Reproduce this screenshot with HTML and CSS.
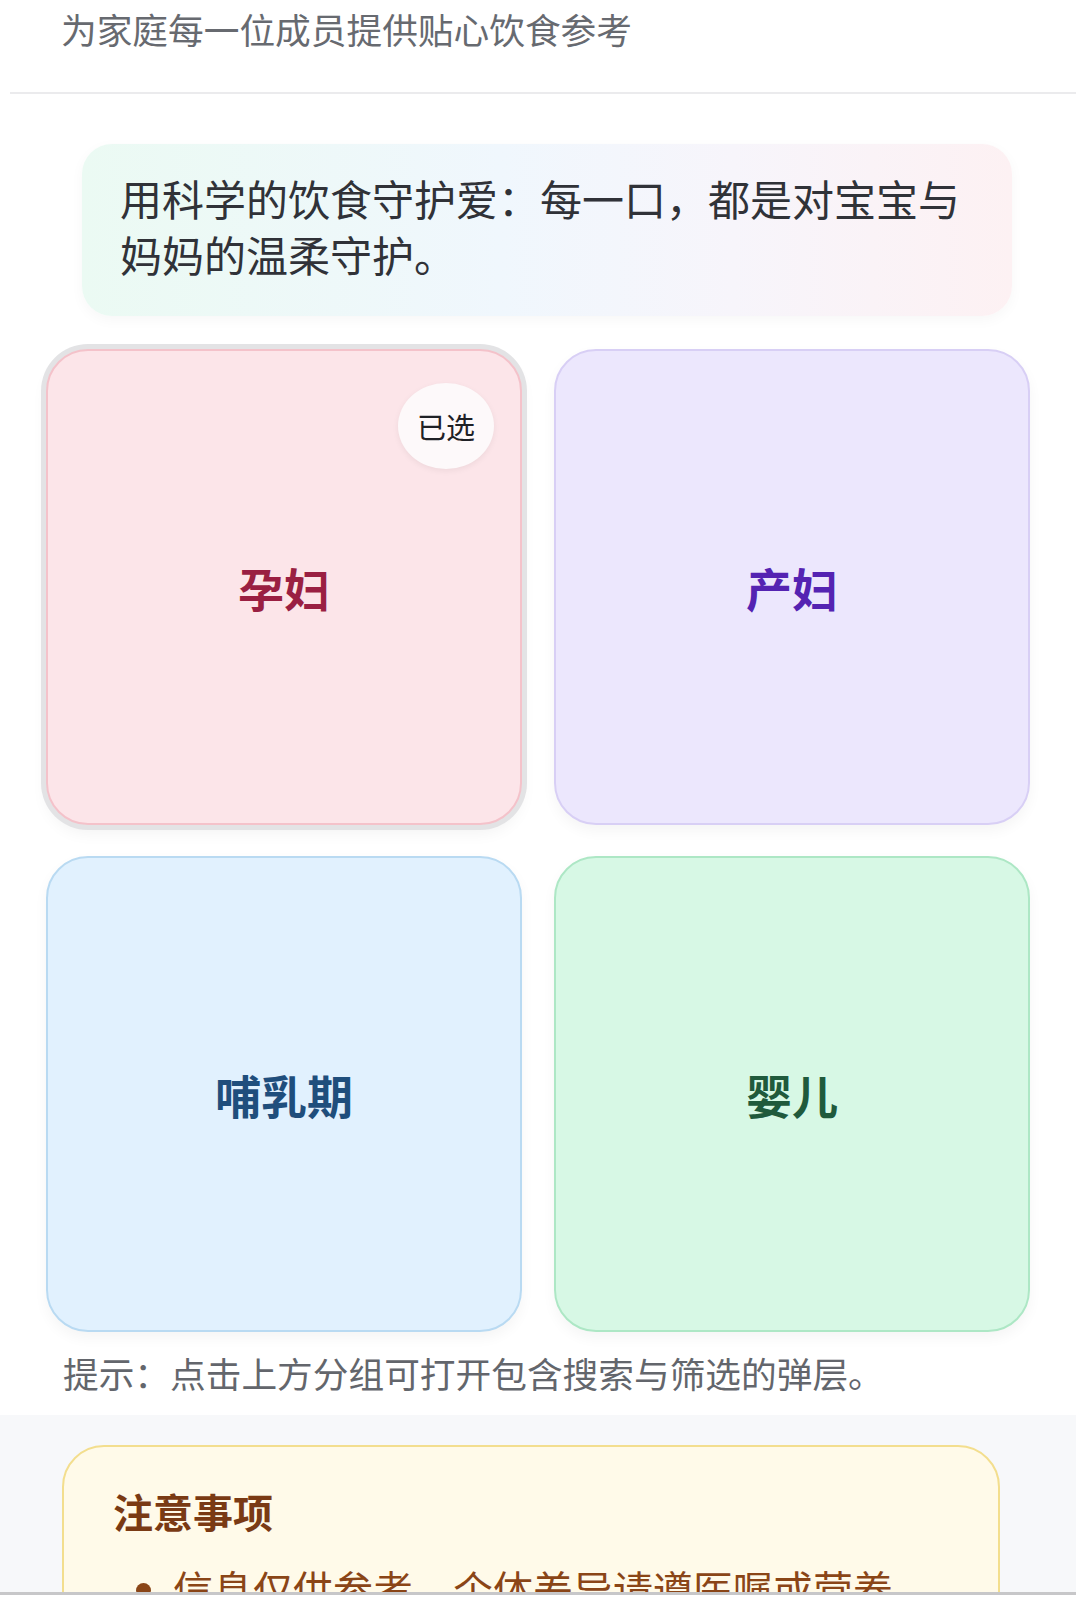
FILE: index.html
```html
<!DOCTYPE html>
<html lang="zh-CN">
<head>
<meta charset="utf-8">
<title>家庭饮食参考</title>
<link rel="stylesheet" href="styles.css">
</head>
<body>
<header class="top">
  <p class="subtitle">为家庭每一位成员提供贴心饮食参考</p>
</header>
<main class="content">
  <div class="quote">用科学的饮食守护爱：每一口，都是对宝宝与妈妈的温柔守护。</div>
  <div class="groups">
    <button class="group group-pregnant is-selected">
      <span class="badge">已选</span>
      <span class="label">孕妇</span>
    </button>
    <button class="group group-postpartum">
      <span class="label">产妇</span>
    </button>
    <button class="group group-lactation">
      <span class="label">哺乳期</span>
    </button>
    <button class="group group-infant">
      <span class="label">婴儿</span>
    </button>
  </div>
  <p class="tip">提示：点击上方分组可打开包含搜索与筛选的弹层。</p>
</main>
<section class="notice-wrap">
  <div class="notice">
    <h2 class="notice-title">注意事项</h2>
    <ul class="notice-list">
      <li>信息仅供参考，个体差异请遵医嘱或营养师建议。</li>
      <li>如有过敏或特殊疾病，请先咨询专业人士。</li>
    </ul>
  </div>
</section>
<nav class="bottom-bar"></nav>
</body>
</html>
```

FILE: styles.css
```css
* { box-sizing: border-box; }

html, body {
  margin: 0;
  padding: 0;
  background: #ffffff;
  font-family: "Noto Sans CJK SC", "Noto Sans", sans-serif;
}

.top {
  padding: 5px 0 39px 0;
  margin-left: 10px;
  border-bottom: 2px solid #ebebed;
}

.subtitle {
  margin: 0;
  padding-left: 51px;
  font-size: 35.7px;
  line-height: 48px;
  color: #676a70;
}

.content {
  padding: 50px 46px 18px 46px;
}

.quote {
  margin: 0 18px 0 36px;
  padding: 26px 36px 34px 38px;
  border-radius: 30px;
  background: linear-gradient(90deg, #ebfaf3 0%, #f0f7fd 45%, #f7f5fb 70%, #fdf1f3 100%);
  box-shadow: 0 4px 14px rgba(0, 0, 0, 0.035);
  font-size: 42px;
  line-height: 56px;
  color: #303238;
}

.groups {
  margin-top: 33px;
  display: grid;
  grid-template-columns: 1fr 1fr;
  gap: 31px 32px;
}

.group {
  position: relative;
  aspect-ratio: 1 / 1;
  display: flex;
  align-items: center;
  justify-content: center;
  border-radius: 42px;
  border: 2px solid transparent;
  font-family: inherit;
  padding: 0;
  box-shadow: 0 6px 14px rgba(0, 0, 0, 0.045);
  cursor: pointer;
}

.label {
  font-size: 46px;
  font-weight: 700;
  line-height: 1;
}

.group-pregnant {
  background: #fce5e9;
  border-color: #f4c2ca;
}
.group-pregnant .label { color: #9a1f42; font-weight: 600; }

.group-pregnant.is-selected {
  box-shadow: 0 0 0 5px #e3e3e5, 0 8px 16px rgba(0, 0, 0, 0.05);
}

.group-postpartum {
  background: #ece7fd;
  border-color: #d8cff5;
}
.group-postpartum .label { color: #5423b2; font-weight: 600; }

.group-lactation {
  background: #e1f1fe;
  border-color: #b9daf2;
}
.group-lactation .label { color: #1f4e7c; }

.group-infant {
  background: #d7f8e5;
  border-color: #ade7c5;
}
.group-infant .label { color: #205a3c; font-weight: 600; }

.badge {
  position: absolute;
  top: 32px;
  right: 26px;
  width: 96px;
  height: 86px;
  border-radius: 50%;
  background: #fdf9fa;
  box-shadow: 0 2px 6px rgba(0, 0, 0, 0.06);
  display: flex;
  align-items: center;
  justify-content: center;
  font-size: 29px;
  color: #1f2126;
}

.tip {
  margin: 17px 0 0 17px;
  font-size: 35.7px;
  line-height: 48px;
  color: #63666c;
}

.notice-wrap {
  background: #f7f8fa;
  padding: 30px 76px 40px 62px;
}

.notice {
  background: #fffae9;
  border: 2px solid #f3de8e;
  border-radius: 42px;
  padding: 36px 70px 30px 49px;
}

.notice-title {
  margin: 0;
  font-size: 40px;
  line-height: 56px;
  font-weight: 700;
  color: #7a3a14;
}

.notice-list {
  margin: 21px 0 0 0;
  padding-left: 60px;
  font-size: 40px;
  line-height: 56px;
  color: #8a4517;
}

.bottom-bar {
  position: fixed;
  left: 0;
  right: 0;
  bottom: 0;
  height: 15px;
  background: #ffffff;
  border-top: 3px solid #c7c7c9;
}
```
